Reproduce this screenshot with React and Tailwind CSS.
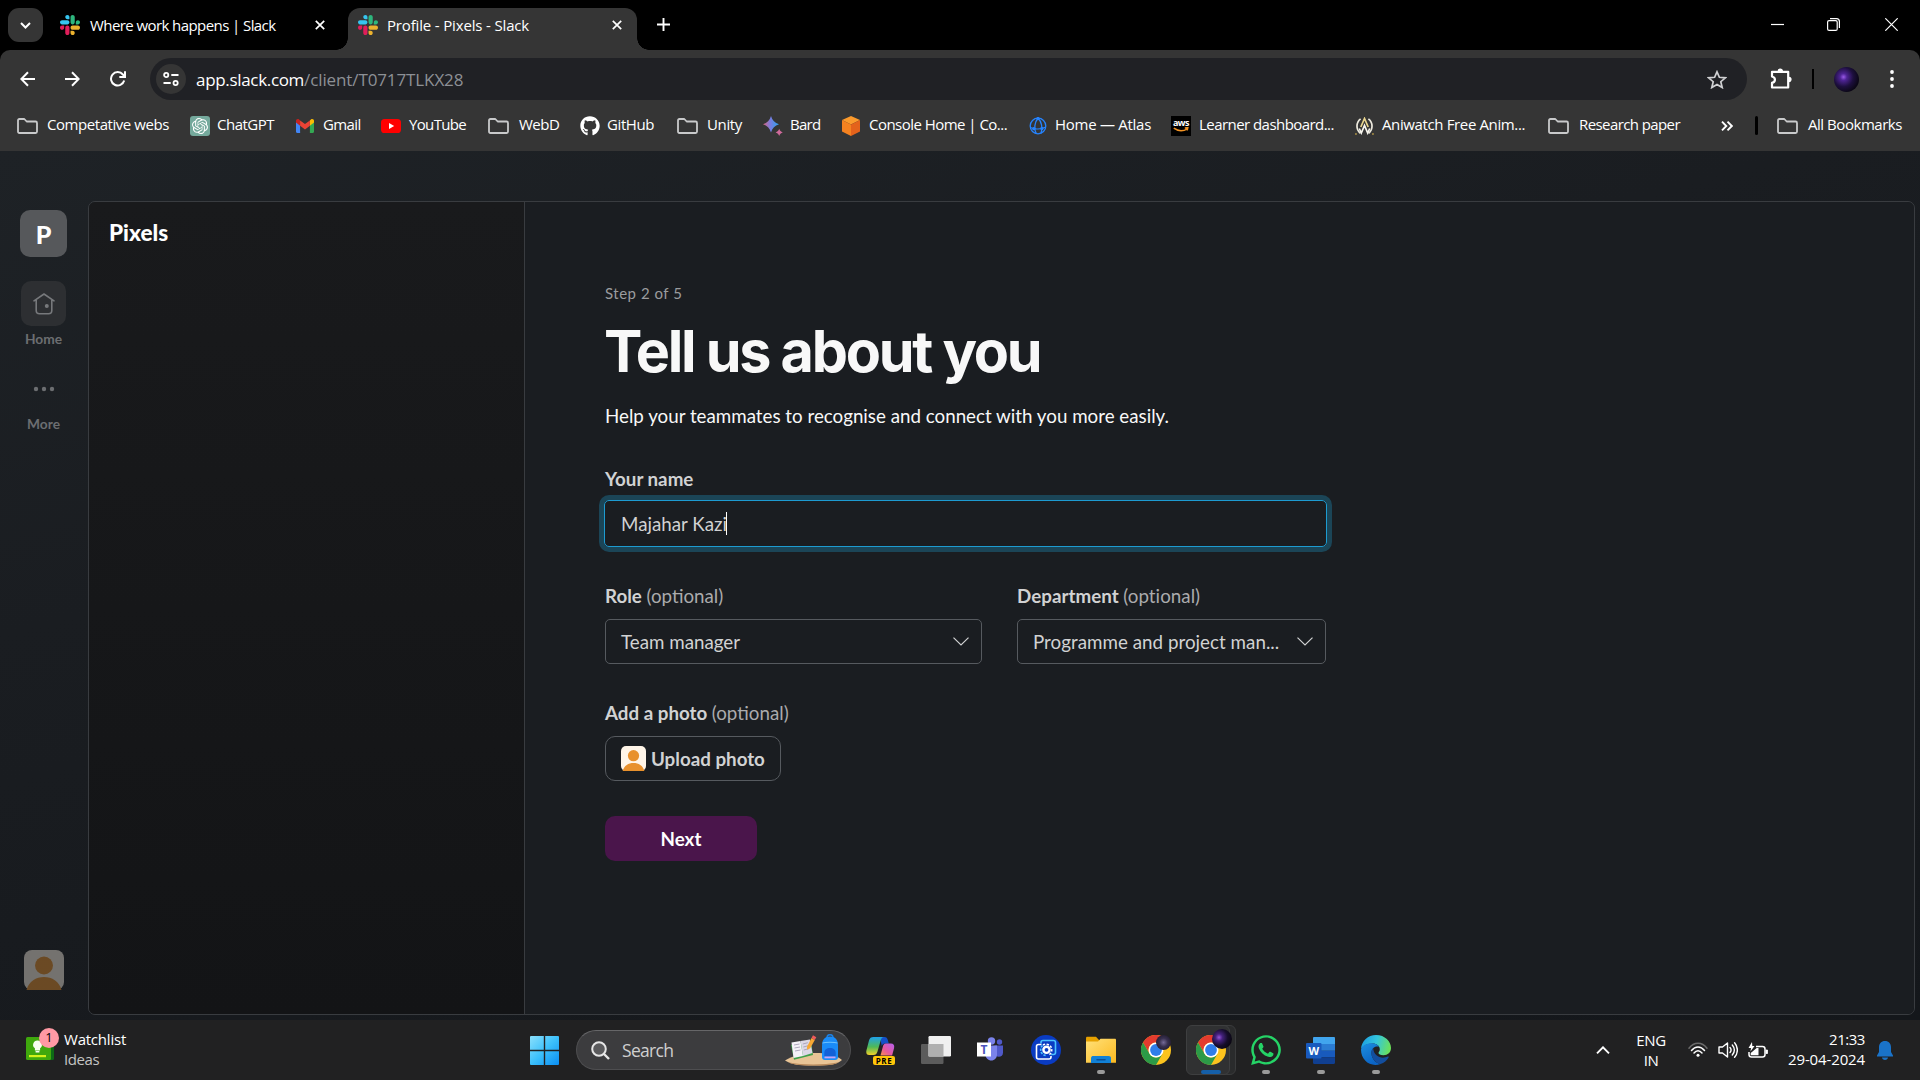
import { FaGithub, FaWhatsapp } from "react-icons/fa";
import { SiOpenai } from "react-icons/si";

/* ---------- Browser icons ---------- */

function SlackLogo() {
  return (
    <svg viewBox="0 0 122.8 122.8" className="h-5 w-5 shrink-0">
      <path fill="#e01e5a" d="M25.8 77.6c0 7.1-5.8 12.9-12.9 12.9S0 84.7 0 77.6s5.8-12.9 12.9-12.9h12.9v12.9zM32.3 77.6c0-7.1 5.8-12.9 12.9-12.9s12.9 5.8 12.9 12.9v32.3c0 7.1-5.8 12.9-12.9 12.9s-12.9-5.8-12.9-12.9V77.6z" />
      <path fill="#36c5f0" d="M45.2 25.8c-7.1 0-12.9-5.8-12.9-12.9S38.1 0 45.2 0s12.9 5.8 12.9 12.9v12.9H45.2zM45.2 32.3c7.1 0 12.9 5.8 12.9 12.9s-5.8 12.9-12.9 12.9H12.9C5.8 58.1 0 52.3 0 45.2s5.8-12.9 12.9-12.9h32.3z" />
      <path fill="#2eb67d" d="M97 45.2c0-7.1 5.8-12.9 12.9-12.9s12.9 5.8 12.9 12.9-5.8 12.9-12.9 12.9H97V45.2zM90.5 45.2c0 7.1-5.8 12.9-12.9 12.9s-12.9-5.8-12.9-12.9V12.9C64.7 5.8 70.5 0 77.6 0s12.9 5.8 12.9 12.9v32.3z" />
      <path fill="#ecb22e" d="M77.6 97c7.1 0 12.9 5.8 12.9 12.9s-5.8 12.9-12.9 12.9-12.9-5.8-12.9-12.9V97h12.9zM77.6 90.5c-7.1 0-12.9-5.8-12.9-12.9s5.8-12.9 12.9-12.9h32.3c7.1 0 12.9 5.8 12.9 12.9s-5.8 12.9-12.9 12.9H77.6z" />
    </svg>
  );
}

function CloseIcon() {
  return (
    <svg viewBox="0 0 10 10" className="h-[10px] w-[10px] shrink-0" stroke="#fff" strokeWidth="1.7" fill="none">
      <path d="M.8.8l8.4 8.4M9.2.8L.8 9.2" />
    </svg>
  );
}

function FolderIcon() {
  return (
    <svg viewBox="0 0 21 16" className="h-4 w-[21px] shrink-0" fill="none" stroke="#c9cacb" strokeWidth="1.8" strokeLinejoin="round">
      <path d="M1 2.4C1 1.5 1.5 1 2.4 1h4.9l2.4 2.5h8.9c.9 0 1.4.5 1.4 1.4v8.7c0 .9-.5 1.4-1.4 1.4H2.4C1.5 15 1 14.5 1 13.6z" />
    </svg>
  );
}

function ChatGptIcon() {
  return (
    <span className="grid h-5 w-5 shrink-0 place-items-center rounded-[3px] bg-[#75a99c] text-white">
      <SiOpenai size={16} />
    </span>
  );
}

function GmailIcon() {
  return (
    <svg viewBox="0 0 18 14" className="h-[14px] w-[18px] shrink-0">
      <path fill="#4285f4" d="M0 2.5V12.8C0 13.5.5 14 1.2 14h2.9V5.2z" />
      <path fill="#34a853" d="M18 2.5V12.8c0 .7-.5 1.2-1.2 1.2h-2.9V5.2z" />
      <path fill="#fbbc04" d="M13.9 1.4v5.3L18 3.6V1.9C18 .3 16.2-.5 14.9.6z" />
      <path fill="#c5221f" d="M4.1 1.4v5.3L0 3.6V1.9C0 .3 1.8-.5 3.1.6z" />
      <path fill="#ea4335" d="M4.1 1.4L9 5.1l4.9-3.7v5.3L9 10.4 4.1 6.7z" />
    </svg>
  );
}

function YouTubeIcon() {
  return (
    <svg viewBox="0 0 20 14" className="h-[14px] w-5 shrink-0">
      <rect width="20" height="14" rx="3.6" fill="#f00" />
      <path d="M8 4l5.2 3L8 10z" fill="#fff" />
    </svg>
  );
}

function BardIcon() {
  return (
    <svg viewBox="0 0 20 20" className="h-5 w-5 shrink-0">
      <defs>
        <linearGradient id="bard" x1="0" x2="1">
          <stop offset="0" stopColor="#d9657b" />
          <stop offset=".45" stopColor="#7a7ce0" />
          <stop offset="1" stopColor="#2ba3f0" />
        </linearGradient>
      </defs>
      <path fill="url(#bard)" d="M8 0c1.300 4.400 3.800 6.900 8 8.200-4.200 1.400-6.700 3.800-8 8.200-1.300-4.400-3.800-6.800-8-8.200C4.200 6.900 6.700 4.400 8 0z" />
      <path fill="#cf6a9b" d="M16.200 12.800c.6 1.900 1.700 3 3.600 3.600-1.900.6-3 1.700-3.600 3.600-.6-1.900-1.700-3-3.600-3.600 1.900-.6 3-1.700 3.600-3.600z" />
    </svg>
  );
}

function ConsoleIcon() {
  return (
    <svg viewBox="0 0 18 20" className="h-5 w-[18px] shrink-0">
      <path fill="#fb9a2c" d="M9 0l9 4-9 4.500L0 4z" />
      <path fill="#f58220" d="M0 4l9 4.500V20l-9-4.500z" />
      <path fill="#e4621b" d="M18 4L9 8.500V20l9-4.500z" />
    </svg>
  );
}

function AtlasIcon() {
  return (
    <svg viewBox="0 0 18 18" className="h-[18px] w-[18px] shrink-0" fill="none" stroke="#2684ff" strokeWidth="1.300">
      <circle cx="9" cy="9" r="7.800" />
      <path d="M9 1.200C5.500 5 4.800 12 7.200 16.600M9 1.200c3.500 3 5 9.500 3 15M1.300 10.500c4.500 2 11 2 15.500-.5" />
      <circle cx="9" cy="1.600" r="1" fill="#2684ff" />
      <circle cx="4.800" cy="11.700" r="1" fill="#2684ff" />
      <circle cx="12.900" cy="11.500" r="1" fill="#2684ff" />
    </svg>
  );
}

function AwsIcon() {
  return (
    <span className="flex h-5 w-5 shrink-0 flex-col items-center bg-black pt-[3px]">
      <span className="font-['Open_Sans',sans-serif] text-[9px] leading-[8px] font-bold tracking-[-0.5px] text-white">aws</span>
      <svg viewBox="0 0 16 5" className="h-[5px] w-4" fill="none" stroke="#f39323" strokeWidth="1.500">
        <path d="M.8 1.200c4.500 3.200 9.500 3.200 13.500.6M11.800.9l3-.2-.6 2.700" />
      </svg>
    </span>
  );
}

function AniwatchIcon() {
  return (
    <svg viewBox="0 0 19 18" className="h-[18px] w-[19px] shrink-0" fill="none" strokeWidth="1.700">
      <path stroke="#ece9dd" d="M5.600 1.800C.8 5.500.8 12.500 5.400 16.300M13.400 1.800c4.800 3.700 4.800 10.700.2 14.500" />
      <path stroke="#e8d48d" d="M5.800 10L9.500 1.500l3.700 8.500" />
      <path stroke="#f7f5ee" d="M4.300 11.500l2 4.500L9.500 8.500l3.200 7.500 2-4.500" />
      <path stroke="#c9a94a" d="M.2 17h1.500M17.200 17h1.500" />
    </svg>
  );
}

/* ---------- Browser chrome ---------- */

const bookmarks = [
  { icon: <FolderIcon />, label: "Competative webs", box: "w-[173px] gap-[9px] tracking-[-0.44px]" },
  { icon: <ChatGptIcon />, label: "ChatGPT", box: "w-[106px] gap-[7px] tracking-[-0.5px]" },
  { icon: <GmailIcon />, label: "Gmail", box: "w-[85px] gap-[9px] tracking-[-0.6px]" },
  { icon: <YouTubeIcon />, label: "YouTube", box: "w-[107px] gap-[8px] tracking-[-0.65px]" },
  { icon: <FolderIcon />, label: "WebD", box: "w-[92px] gap-[10px] tracking-[-0.5px]" },
  { icon: <FaGithub size={20} className="shrink-0" />, label: "GitHub", box: "w-[97px] gap-[7px] tracking-[-0.4px]" },
  { icon: <FolderIcon />, label: "Unity", box: "w-[86px] gap-[9px] tracking-[-0.36px]" },
  { icon: <BardIcon />, label: "Bard", box: "w-[79px] gap-[7px] tracking-[-0.7px]" },
  { icon: <ConsoleIcon />, label: "Console Home | Co...", box: "w-[187px] gap-[9px] tracking-[-0.53px]" },
  { icon: <AtlasIcon />, label: "Home — Atlas", box: "w-[142px] gap-[8px] tracking-[-0.27px]" },
  { icon: <AwsIcon />, label: "Learner dashboard...", box: "w-[184px] gap-[8px] tracking-[-0.55px]" },
  { icon: <AniwatchIcon />, label: "Aniwatch Free Anim...", box: "w-[193px] gap-[8px] tracking-[-0.37px]" },
  { icon: <FolderIcon />, label: "Research paper", box: "w-[173px] gap-[10px] tracking-[-0.59px]" },
];

function TabStrip() {
  return (
    <div className="flex h-[50px] bg-black text-[15px]">
      <div className="mt-2 ml-2 grid h-[34px] w-[35px] place-items-center rounded-[11px] bg-[#353535]">
        <svg viewBox="0 0 11 7" className="h-[7px] w-[11px]" fill="none" stroke="#fff" strokeWidth="2">
          <path d="M1 1l4.500 4.500L10 1" />
        </svg>
      </div>
      <div className="flex w-[305px] items-center pl-[17px]">
        <SlackLogo />
        <span className="ml-[10px] w-[225px] whitespace-nowrap tracking-[-0.58px]">Where work happens | Slack</span>
        <CloseIcon />
      </div>
      <div className="relative mt-2 flex w-[289px] items-center rounded-t-[12px] bg-[#353535] pb-2 pl-[10px]">
        <span className="absolute bottom-0 -left-3 h-3 w-3 bg-[radial-gradient(circle_at_0_0,#000_11.500px,#353535_12px)]" />
        <span className="absolute -right-3 bottom-0 h-3 w-3 bg-[radial-gradient(circle_at_100%_0,#000_11.500px,#353535_12px)]" />
        <SlackLogo />
        <span className="ml-[9px] w-[225px] whitespace-nowrap tracking-[-0.16px]">Profile - Pixels - Slack</span>
        <CloseIcon />
      </div>
      <svg viewBox="0 0 13 13" className="mt-[18px] ml-[20px] h-[13px] w-[13px]" stroke="#fff" strokeWidth="1.900">
        <path d="M6.500 0v13M0 6.500h13" />
      </svg>
      <div className="mr-[22px] ml-auto flex items-center pb-px text-white">
        <svg viewBox="0 0 13 13" className="h-[13px] w-[13px]" stroke="#fff" strokeWidth="1.200">
          <path d="M0 6.500h13" />
        </svg>
        <svg viewBox="0 0 13 13" className="ml-[43px] h-[13px] w-[13px]" fill="none" stroke="#fff" strokeWidth="1.200">
          <rect x=".6" y="2.600" width="9.600" height="9.800" rx="1.500" />
          <path d="M3 .7h6.500c1.700 0 2.900 1.200 2.900 2.900v6.300" />
        </svg>
        <svg viewBox="0 0 13 13" className="ml-[45px] h-[13px] w-[13px]" stroke="#fff" strokeWidth="1.200">
          <path d="M.3.3l12.400 12.400M12.700.3L.3 12.700" />
        </svg>
      </div>
    </div>
  );
}

function Toolbar() {
  return (
    <div className="flex h-[58px] items-center">
      <svg viewBox="0 0 16 16" className="ml-[20px] h-4 w-4" fill="none" stroke="#fff" strokeWidth="2">
        <path d="M15 8H1.800M8 1.300L1.300 8 8 14.700" />
      </svg>
      <svg viewBox="0 0 16 16" className="ml-[28px] h-4 w-4" fill="none" stroke="#fff" strokeWidth="2">
        <path d="M1 8h13.200M8 1.300L14.700 8 8 14.700" />
      </svg>
      <svg viewBox="0 0 16 16" className="ml-[30px] h-4 w-4" fill="none" stroke="#fff" strokeWidth="2">
        <path d="M14.200 9.500A6.700 6.700 0 1 1 12.900 3.500L15 5.700M15 .3v5.600H9.300" />
      </svg>
      <div className="ml-[24px] flex h-[42px] w-[1597px] items-center rounded-full bg-[#202125] pl-[6px]">
        <div className="grid h-[30px] w-[30px] place-items-center rounded-full bg-[#353535]">
          <svg viewBox="0 0 16 14" className="h-[14px] w-4" fill="none" stroke="#fff" strokeWidth="1.800">
            <circle cx="3.200" cy="3" r="2.100" />
            <path d="M8.300 3H15.500M.5 11h7.200" />
            <circle cx="12.600" cy="11" r="2.100" />
          </svg>
        </div>
        <div className="ml-[10px] pt-px text-[17px] tracking-[-0.11px] whitespace-nowrap text-[#8d9095]">
          <span className="tracking-[-0.32px] text-white">app.slack.com</span>/client/T0717TLKX28
        </div>
        <svg viewBox="0 0 20 19" className="mr-[20px] ml-auto h-[19px] w-5" fill="none" stroke="#d0d1d3" strokeWidth="1.700">
          <path d="M10 1.800l2.400 5.500 6 .5-4.600 3.900 1.400 5.800L10 14.400l-5.200 3.100 1.400-5.800L1.600 7.800l6-.5z" />
        </svg>
      </div>
      <svg viewBox="0 0 22 21" className="ml-[23px] h-[21px] w-[22px] -translate-y-px" fill="none" stroke="#fff" strokeWidth="2.200" strokeLinejoin="round">
        <path d="M2 3.800h16.200V19.500H2v-4.600c3.900-1 3.900-5.400 0-6.400z" />
        <path d="M8.200 3.200a2.100 2.100 0 0 1 4.200 0zM18.800 9.300a2.100 2.100 0 0 1 0 4.400z" fill="#fff" strokeWidth="1.200" />
      </svg>
      <span className="ml-[20px] h-5 w-[2px] bg-black" />
      <span className="ml-[20px] h-[25px] w-[25px] rounded-full bg-[radial-gradient(circle_at_38%_40%,#9a5ae8_0,#4e2494_16%,#1d0f3e_45%,#0b0716_72%)]" />
      <svg viewBox="0 0 4 18" className="ml-[31px] h-[18px] w-1" fill="#fff">
        <circle cx="2" cy="2" r="1.900" />
        <circle cx="2" cy="9" r="1.900" />
        <circle cx="2" cy="16" r="1.900" />
      </svg>
    </div>
  );
}

function BookmarksBar() {
  return (
    <div className="flex h-[43px] items-center pb-[8px] pl-[17px] text-[15px]">
      {bookmarks.map((b) => (
        <div key={b.label} className={"flex shrink-0 items-center whitespace-nowrap " + b.box}>
          {b.icon}
          <span className="-translate-y-px">{b.label}</span>
        </div>
      ))}
      <svg viewBox="0 0 12 10" className="h-[10px] w-3 shrink-0" fill="none" stroke="#fff" strokeWidth="1.900">
        <path d="M1 .7L5.300 5 1 9.300M6.500.7L10.800 5 6.500 9.300" />
      </svg>
      <span className="ml-[22px] h-[19px] w-[3px] shrink-0 rounded bg-black" />
      <div className="ml-[19px] flex items-center gap-[10px] tracking-[-0.46px] whitespace-nowrap">
        <FolderIcon />
        <span className="-translate-y-px">All Bookmarks</span>
      </div>
    </div>
  );
}

/* ---------- Slack ---------- */

function Avatar({ className }) {
  return (
    <svg viewBox="0 0 40 40" className={className}>
      <rect width="40" height="40" rx="8" fill="#fff5e8" />
      <circle cx="20" cy="15.500" r="9" fill="#e8912d" />
      <path d="M2.500 40C5 31 12 27 20 27s15 4 17.500 13z" fill="#e8912d" />
    </svg>
  );
}

function Rail() {
  return (
    <div className="flex w-[87px] shrink-0 flex-col items-center pt-[9px] pb-[25px] text-[13.75px] leading-5 font-bold text-[#6c6e71]">
      <div className="grid h-[47px] w-[47px] place-items-center rounded-[10px] bg-[#56585b] text-[25px] font-black text-white">P</div>
      <div className="mt-[24px] grid h-[45px] w-[45px] place-items-center rounded-[10px] bg-[#2d2f32]">
        <svg viewBox="0 0 22 22" className="h-[22px] w-[22px]" fill="none" stroke="#77797c" strokeWidth="1.600" strokeLinecap="round" strokeLinejoin="round">
          <path d="M1 7.800L11 1l10 6.800M3.200 6.500v11c0 2 1.300 3.300 3.300 3.300h9c2 0 3.300-1.300 3.300-3.300v-11" />
          <circle cx="13.800" cy="13" r="1.200" fill="#77797c" />
        </svg>
      </div>
      <span className="mt-[3px]">Home</span>
      <svg viewBox="0 0 22 6" className="mt-[37px] h-[6px] w-[22px]" fill="#6c6e71">
        <circle cx="3" cy="3" r="2.200" />
        <circle cx="11" cy="3" r="2.200" />
        <circle cx="19" cy="3" r="2.200" />
      </svg>
      <span className="mt-[22px]">More</span>
      <Avatar className="mt-auto h-10 w-10 opacity-40" />
    </div>
  );
}

function Optional() {
  return <span className="font-normal text-[#ababad]">(optional)</span>;
}

function SelectBox({ value, className }) {
  return (
    <div className={"flex h-[45px] items-center justify-between rounded-[5px] border border-[#565a5f] pl-[15px] whitespace-nowrap " + className}>
      <span>{value}</span>
      <svg viewBox="0 0 16 9" className="h-[9px] w-4" fill="none" stroke="#d1d2d3" strokeWidth="1.200">
        <path d="M.5.600L8 8l7.500-7.400" />
      </svg>
    </div>
  );
}

function ProfileForm() {
  return (
    <div className="flex flex-1 flex-col rounded-r-[7px] bg-[#1a1d21] pt-[79px] pl-[80px] text-[18.75px] leading-7 text-[#d1d2d3]">
      <p className="text-[15px] leading-6 tracking-[0.52px] text-[#9b9c9e]">Step 2 of 5</p>
      <h1 className="mt-[11px] -ml-px font-['Inter',sans-serif] text-[57.500px] leading-[70px] font-bold tracking-[-2.250px] text-[#f8f8f8]">
        Tell us about you
      </h1>
      <p className="mt-[16px] text-[#f8f8f8]">Help your teammates to recognise and connect with you more easily.</p>
      <label className="mt-[35px] font-bold">Your name</label>
      <div className="mt-[7px] -ml-px flex h-[47px] w-[723px] items-center rounded-[5px] border border-[#1d9bd1] pl-[16px] shadow-[0_0_0_5px_#1b4557]">
        <span>Majahar Kazi</span>
        <span className="-ml-px h-[23px] w-px bg-white" />
      </div>
      <div className="mt-[35px] flex">
        <div className="w-[412px]">
          <label className="block font-bold">Role <Optional /></label>
          <SelectBox value="Team manager" className="mt-[9px] w-[377px] pr-[12px]" />
        </div>
        <div>
          <label className="block font-bold tracking-[0.03px]">Department <Optional /></label>
          <SelectBox value="Programme and project man..." className="mt-[9px] w-[309px] pr-[12px] tracking-[0.03px]" />
        </div>
      </div>
      <label className="mt-[35px] font-bold">Add a photo <Optional /></label>
      <button className="mt-[9px] flex h-[45px] w-[176px] items-center rounded-[10px] border border-[#565a5f] pl-[15px] font-bold whitespace-nowrap">
        <Avatar className="h-[25px] w-[25px]" />
        <span className="ml-[5px]">Upload photo</span>
      </button>
      <button className="mt-[35px] h-[45px] w-[152px] rounded-[10px] bg-[#4a154b] font-bold text-white">Next</button>
    </div>
  );
}

function SlackApp() {
  return (
    <div className="flex h-[869px] bg-[linear-gradient(165deg,#1e2226_0%,#1a1d21_35%,#14171b_100%)] pt-[50px] pr-[5px] pb-[5px] font-['Lato',sans-serif]">
      <Rail />
      <div className="ml-px flex flex-1 rounded-[7px] border border-[#393c40]">
        <div className="w-[436px] rounded-l-[6px] border-r border-[#393c40] bg-[linear-gradient(180deg,#191a1c,#131416)] pt-[16px] pl-[20px] text-[22.500px] leading-[30px] font-black text-white">
          Pixels
        </div>
        <ProfileForm />
      </div>
    </div>
  );
}

/* ---------- Taskbar ---------- */

function WidgetIcon() {
  return (
    <div className="relative h-[25px] w-[28px]">
      <svg viewBox="0 0 28 25" className="h-[25px] w-[28px]">
        <rect x="20" width="8" height="23" rx="1.500" fill="#0d6a15" />
        <rect width="25" height="23" rx="1.500" fill="#3fa80d" />
        <path d="M11.500 3.500a4.300 4.300 0 0 0-2.600 7.800v2.200h5.200v-2.200a4.300 4.300 0 0 0-2.600-7.800zM9.600 14.100h3.800v1.400H9.600z" fill="#f6fff0" />
        <rect x="3" y="18" width="17" height="2.200" fill="#d5f21b" />
      </svg>
      <span className="absolute -top-[9px] left-[13px] grid h-5 w-5 place-items-center rounded-full bg-[#ff99a4] text-[13px] leading-none text-black">1</span>
    </div>
  );
}

function WindowsIcon() {
  return (
    <svg viewBox="0 0 29 29" className="h-[29px] w-[29px]">
      <defs>
        <linearGradient id="win" x1="0" y1="0" x2="1" y2="1">
          <stop offset="0" stopColor="#8be0fb" />
          <stop offset=".5" stopColor="#3cc0fb" />
          <stop offset="1" stopColor="#0a8ef3" />
        </linearGradient>
      </defs>
      <path fill="url(#win)" d="M0 1a1 1 0 0 1 1-1h12.800v13.800H0zM15.200 0H28a1 1 0 0 1 1 1v12.800H15.200zM0 15.200h13.800V29H1a1 1 0 0 1-1-1zM15.200 15.200H29V28a1 1 0 0 1-1 1H15.200z" />
    </svg>
  );
}

function SearchArt() {
  return (
    <svg viewBox="0 0 58 32" className="h-8 w-[58px]">
      <path d="M0 26.500C8 21.500 18 19 30 19s20 1.500 27 7c-5 4.500-12 5.500-28 5.500S8 31 0 26.500z" fill="#e8c496" />
      <path d="M3 28.300c16 3 34 3 51 0-5 3.100-12 3.300-25 3.300S10 31.300 3 28.300z" fill="#b98a5b" />
      <path d="M6 11l20-3.500 2 13.500-19 4.800z" fill="#3fa04a" />
      <path d="M6.500 8.500L15.500 7l2.500 15-9.500 2z" fill="#f4f1f7" />
      <path d="M15.500 7l9.500-1.500L27.500 19 18 22z" fill="#dcd8e6" />
      <path d="M9 11l5.500-1M9.500 14l5.500-1M10 17l5.500-1M17.800 10l5-1.300M18.300 13l5-1.300M18.800 16l5-1.300" stroke="#a69fb5" strokeWidth=".9" />
      <path d="M22 12.700L26.500 4l3.300 2-4.600 8.200-3 1.500z" fill="#f8a833" />
      <path d="M26.500 4L28 1.300l3.300 2L29.800 6z" fill="#ef5b5b" />
      <path d="M42 4c0-4.500 6-4.500 6 0" fill="none" stroke="#1d7fe0" strokeWidth="1.500" />
      <path d="M37 11.500C37 5.500 40 2.500 45 2.500s8 3 8 9V23c0 2-1 3-3 3H40c-2 0-3-1-3-3z" fill="#1a8cf8" />
      <path d="M37.500 9c4-1 11-1 15 0" stroke="#6ec4ff" fill="none" />
      <path d="M39.300 19c0-3.300 2.300-5 5.700-5s5.700 1.700 5.700 5v3.500H39.300z" fill="#1261d8" />
      <path d="M39.500 22.500h11v1.800h-11z" fill="#c6a4f5" />
    </svg>
  );
}

function CopilotIcon() {
  return (
    <div className="relative h-[29px] w-[29px]">
      <svg viewBox="0 0 29 29" className="h-[29px] w-[29px]">
        <defs>
          <linearGradient id="cop1" x1="0" y1="0" x2="0" y2="1">
            <stop offset="0" stopColor="#1fa2ea" />
            <stop offset=".55" stopColor="#4fb957" />
            <stop offset="1" stopColor="#f2d029" />
          </linearGradient>
          <linearGradient id="cop2" x1="1" y1="0" x2="0" y2="1">
            <stop offset="0" stopColor="#b55ff0" />
            <stop offset=".6" stopColor="#e85a9b" />
            <stop offset="1" stopColor="#f7934d" />
          </linearGradient>
        </defs>
        <path d="M14 1h4.500c2 0 2.700 1 3.300 3l1 3.500h-3.500c-2 0-2.900.8-3.500 2.600z" fill="#1450c8" />
        <path d="M7.500 1H18c-2 0-2.700 1.500-3.300 3.500l-3.200 11C10.700 18 9.700 19 7.500 19H3.200C.7 19-.1 17.300.4 14.600L3 4.500C3.700 2 5 1 7.500 1z" fill="url(#cop1)" />
        <path d="M19.800 7.500h5c2.800 0 3.800 1.700 3.300 4.500l-2 7.500H14.500l2.500-9.300c.5-1.800 1.200-2.700 2.800-2.700z" fill="url(#cop2)" />
      </svg>
      <span className="absolute top-[20px] left-[7px] grid h-[9px] w-[22px] place-items-center rounded-[2px] bg-[#ffc60a] text-[8px] leading-[9px] font-bold tracking-[0.5px] text-black">PRE</span>
    </div>
  );
}

function TaskViewIcon() {
  return (
    <svg viewBox="0 0 30 28" className="h-[28px] w-[30px]">
      <rect x="0" y="8" width="22.500" height="20" rx="1.200" fill="#5c5c5c" />
      <rect x="7.500" y="0" width="22.500" height="20.500" rx="1.200" fill="#f0f0f0" />
      <path d="M7.500 8h15v12.500h-15z" fill="#b0b0b0" />
    </svg>
  );
}

function TeamsIcon() {
  return (
    <div className="relative h-[26px] w-[27px]">
      <svg viewBox="0 0 27 26" className="h-[26px] w-[27px]">
        <circle cx="22.500" cy="5" r="2.700" fill="#5059c9" />
        <path d="M17.500 8.500H26v7.300c0 2.500-1.800 4-4.200 4s-4.300-1.500-4.300-4z" fill="#5059c9" />
        <circle cx="14.500" cy="4" r="3.700" fill="#7b83eb" />
        <path d="M8.500 8.500h11.500v9c0 3.500-2.500 6-5.700 6s-5.800-2.500-5.800-6z" fill="#7b83eb" />
        <rect y="5.500" width="14" height="14" fill="#fff" />
      </svg>
      <span className="absolute top-[5px] left-0 w-[14px] text-center text-[12px] leading-[15px] font-bold text-[#4b53bc]">T</span>
    </div>
  );
}

function SettingsSyncIcon() {
  return (
    <svg viewBox="0 0 30 30" className="h-[30px] w-[30px]" fill="none">
      <circle cx="15" cy="15" r="15" fill="#0a3bc2" />
      <path d="M10 8.500V7.500C10 6 11 5.500 12 5.500h10.500c1.500 0 2 .8 2 2v10c0 1.300-.5 2-2 2H20" stroke="#4cc2ff" strokeWidth="1.600" />
      <path d="M10.500 9.500H7.500c-1.500 0-2 .8-2 2v10.500c0 1.500.8 2 2 2h10.500c1.300 0 2-.6 2-2v-1" stroke="#fff" strokeWidth="1.600" />
      <path d="M11.500 10.500A5.800 5.800 0 0 0 15 20.500" stroke="#4cc2ff" strokeWidth="1.700" strokeDasharray="2.300 1.200" />
      <path d="M12 10a5.800 5.800 0 1 1 5.500 10.200" stroke="#fff" strokeWidth="1.500" strokeDasharray="2.300 1.400" />
      <circle cx="15.500" cy="14.800" r="3.100" stroke="#fff" strokeWidth="2.400" />
    </svg>
  );
}

function ExplorerIcon() {
  return (
    <svg viewBox="0 0 30 28" className="h-[28px] w-[30px]">
      <defs>
        <linearGradient id="fold" x1="0" y1="0" x2="1" y2="1">
          <stop offset="0" stopColor="#ffe17a" />
          <stop offset="1" stopColor="#fcb91f" />
        </linearGradient>
      </defs>
      <path d="M0 2.200C0 1 .6.800 1.500.800H10L13 4v3H0z" fill="#e6a100" />
      <path d="M0 5.500h12l2.500-2.700H28.800c.8 0 1.200.5 1.200 1.200v22.800H0z" fill="url(#fold)" />
      <path d="M5 27v-4.500C5 20.500 6 20 7.500 20h15c1.700 0 2.500.7 2.500 2.500V27z" fill="#1181d6" />
      <path d="M11 23.700h8" stroke="#0a4f96" strokeWidth="1.500" strokeLinecap="round" />
    </svg>
  );
}

function ChromeIcon({ profile }) {
  return (
    <div className="relative h-[30px] w-[30px]">
      <svg viewBox="0 0 30 30" className="h-[30px] w-[30px]">
        <circle cx="15" cy="15" r="15" fill="#fcc31e" />
        <path d="M2 7.500A15 15 0 0 1 28 7.500H15a7.500 7.500 0 0 0-6.500 11.200z" fill="#e33b2e" />
        <path d="M2 7.500A15 15 0 0 0 15 30l6.500-11.200A7.500 7.500 0 0 1 8.500 18.700z" fill="#2c9a47" />
        <circle cx="15" cy="15" r="7.500" fill="#fff" />
        <circle cx="15" cy="15" r="5.900" fill="#2f7de9" />
      </svg>
      {profile}
    </div>
  );
}

function WordIcon() {
  return (
    <div className="relative h-[27px] w-[29px]">
      <svg viewBox="0 0 29 27" className="h-[27px] w-[29px]">
        <path d="M7 1.200C7 .5 7.500 0 8.200 0H27.800c.7 0 1.200.5 1.200 1.200V7H7z" fill="#41a5ee" />
        <path d="M7 7h22v6.800H7z" fill="#2b7cd3" />
        <path d="M7 13.800h22v6.500H7z" fill="#185abd" />
        <path d="M7 20.300h22v5.500c0 .7-.5 1.200-1.200 1.200H8.200C7.500 27 7 26.500 7 25.800z" fill="#103f91" />
        <rect y="6" width="15.500" height="15.500" rx="1" fill="#195abe" />
      </svg>
      <span className="absolute top-[6px] left-0 w-[15.500px] text-center text-[11px] leading-[15px] font-bold text-white">W</span>
    </div>
  );
}

function EdgeIcon() {
  return (
    <svg viewBox="0 0 30 30" className="h-[30px] w-[30px]">
      <defs>
        <linearGradient id="edge1" x1="0" y1=".3" x2="1" y2=".5">
          <stop offset="0" stopColor="#1b9de2" />
          <stop offset=".5" stopColor="#34c6dc" />
          <stop offset="1" stopColor="#6be15a" />
        </linearGradient>
        <linearGradient id="edge2" x1="0" y1="0" x2=".5" y2="1">
          <stop offset="0" stopColor="#1c8fe0" />
          <stop offset="1" stopColor="#0b63c4" />
        </linearGradient>
      </defs>
      <path d="M0 14C.5 6 7 0 15 0c9 0 15 6.500 15 13 0 4.500-3.300 7.200-7.500 7.200-3.200 0-5-1.200-5-2.300 0-.8 1.300-1.400 1.300-3.600C18.800 11 16 8.500 11.500 8.500 5.500 8.500 1.500 11.500 0 14z" fill="url(#edge1)" />
      <path d="M0 14.500C1.200 10.500 5.300 8.300 10.500 8.300c3.500 0 6.500 1.500 7.700 3.700-4-1.500-7.700 1.500-7.700 6 0 6 4.500 10 9 11C9.500 32.500 0 25.500 0 14.500z" fill="url(#edge2)" />
      <path d="M12.200 13.300c-1.500 1.300-2.200 3.200-1.700 6.200.8 5 5 9 9 9.500 3.600-1.200 6.500-3.600 8.200-6.800.3-.7-.2-1-.8-.7-5.500 2.700-14 .8-14.700-8.200z" fill="#134e9e" />
    </svg>
  );
}

function TaskSlot({ children, running }) {
  return (
    <div className="relative grid h-[50px] w-[55px] place-items-center">
      {children}
      {running && <span className="absolute bottom-px left-[24px] h-1 w-2 rounded-full bg-[#9a9a9a]" />}
    </div>
  );
}

function Taskbar() {
  return (
    <div className="flex h-[60px] items-center bg-[#212122] text-[15px] leading-5 text-white">
      <div className="flex w-[530px] items-center pb-[2px] pl-[26px]">
        <WidgetIcon />
        <div className="ml-[10px]">
          <div className="tracking-[-0.22px]">Watchlist</div>
          <div className="tracking-[-0.4px] text-[#c4c4c4]">Ideas</div>
        </div>
      </div>
      <WindowsIcon />
      <div className="ml-[17px] flex h-10 w-[275px] items-center rounded-full border border-[#4e4e50] border-t-[#666668] bg-[#3c3c3e] pr-[7px] pl-[14px]">
        <svg viewBox="0 0 19 19" className="h-[19px] w-[19px]" fill="none" stroke="#e6e6e6" strokeWidth="2">
          <circle cx="8" cy="8" r="6.800" fill="#5a5a5c" />
          <path d="M13 13l5 5" strokeWidth="2.400" />
        </svg>
        <span className="ml-[12px] text-[17.500px] tracking-[-0.7px] text-[#cfcfcf]">Search</span>
        <div className="ml-auto"><SearchArt /></div>
      </div>
      <div className="ml-[2px] flex">
        <TaskSlot><CopilotIcon /></TaskSlot>
        <TaskSlot><TaskViewIcon /></TaskSlot>
        <TaskSlot><TeamsIcon /></TaskSlot>
        <TaskSlot><SettingsSyncIcon /></TaskSlot>
        <TaskSlot running><ExplorerIcon /></TaskSlot>
        <TaskSlot>
          <ChromeIcon profile={<span className="absolute top-0 left-[15px] h-[15px] w-[15px] rounded-full bg-[radial-gradient(circle_at_50%_50%,#756a98_0,#38304f_40%,#241e33_75%)]" />} />
        </TaskSlot>
        <div className="relative grid h-[50px] w-[55px] place-items-center">
          <span className="absolute inset-y-0 left-[6px] w-[47px] rounded-[6px] border border-[#3a3b3c] bg-[#2a2b2c]" />
          <span className="absolute inset-y-0 left-[3px] w-[44px] rounded-[6px] border border-[#3e3f40] bg-[#303132]" />
          <ChromeIcon profile={<span className="absolute -top-[6px] left-[16px] h-[20px] w-[20px] rounded-full bg-[radial-gradient(circle_at_35%_42%,#9552d8_0,#43217c_20%,#150d2a_50%,#09060f_80%)]" />} />
          <span className="absolute bottom-px left-[18px] h-1 w-5 rounded-full bg-[#155fa8]" />
        </div>
        <TaskSlot running><FaWhatsapp size={34} color="#25d366" /></TaskSlot>
        <TaskSlot running><WordIcon /></TaskSlot>
        <TaskSlot running><EdgeIcon /></TaskSlot>
      </div>
      <svg viewBox="0 0 14 8" className="ml-[193px] h-2 w-[14px]" fill="none" stroke="#fff" strokeWidth="1.900">
        <path d="M1 7.300l6-6 6 6" />
      </svg>
      <div className="ml-[24px] w-[34px] pb-px text-center tracking-[-0.4px]">
        <div>ENG</div>
        <div>IN</div>
      </div>
      <svg viewBox="0 0 20 16" className="ml-[20px] h-4 w-5" fill="none" stroke="#fff" strokeWidth="1.500" strokeLinecap="round">
        <path d="M1 6.200c5-6.500 13-6.500 18 0" stroke="#6b6b6b" />
        <path d="M3.500 8.500c3.800-4.700 9.200-4.700 13 0M6 11c2.500-3 5.500-3 8 0" />
        <circle cx="10" cy="13.200" r="1.500" fill="#fff" stroke="none" />
      </svg>
      <svg viewBox="0 0 20 18" className="ml-[10px] h-[18px] w-5" fill="none" stroke="#fff" strokeWidth="1.400" strokeLinejoin="round" strokeLinecap="round">
        <path d="M1 6v6h3.500L9.500 16V2L4.500 6z" />
        <path d="M12 6.500c1.300 1.500 1.300 3.500 0 5M14.300 4c2.500 3 2.500 7 0 10M16.600 1.700c3.700 4.300 3.700 10.300 0 14.600" />
      </svg>
      <svg viewBox="0 0 20 17" className="ml-[10px] h-[17px] w-5" fill="none" stroke="#fff" strokeWidth="1.500">
        <path d="M8 4.500h6.500c1.700 0 2.500 1 2.500 2.500v5.500c0 1.600-1 2.500-2.500 2.500h-11C2 15 1 14.200 1 12.500V10" />
        <path d="M18 8h1.500v3.500H18z" fill="#fff" strokeWidth=".8" />
        <path d="M4 0L.5 6H3L2.500 9.500 6.500 4H4.300z" fill="#fff" stroke="none" />
        <path d="M2.700 13.300V11l6-5h1.800v7.300z" fill="#fff" stroke="none" />
      </svg>
      <div className="ml-auto pb-[2px] text-right">
        <div className="tracking-[-0.45px]">21:33</div>
        <div className="tracking-[-0.13px]">29-04-2024</div>
      </div>
      <svg viewBox="0 0 16 19" className="mr-[27px] ml-[12px] h-[19px] w-4" fill="#1a73c9">
        <path d="M8 0C4.300 0 2 2.700 2 6.300V11L0 14.500V15.500h16v-1L14 11V6.300C14 2.700 11.700 0 8 0zM5 16.500h6C10.800 18 9.700 19 8 19s-2.800-1-3-2.500z" />
      </svg>
    </div>
  );
}

export default function App() {
  return (
    <div className="h-[1080px] w-[1920px] overflow-hidden bg-black font-['Open_Sans',sans-serif] text-white">
      <TabStrip />
      <div className="rounded-t-[10px] bg-[#353535]">
        <Toolbar />
        <BookmarksBar />
      </div>
      <SlackApp />
      <Taskbar />
    </div>
  );
}
